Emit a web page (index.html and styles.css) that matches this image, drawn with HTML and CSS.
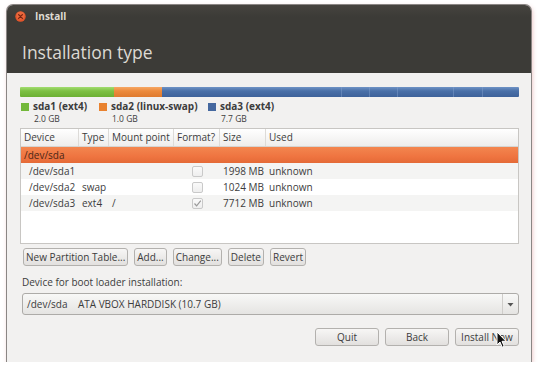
FILE: index.html
```html
<!DOCTYPE html>
<html>
<head>
<meta charset="utf-8">
<link rel="stylesheet" href="styles.css">
</head>
<body>
<div class="window">
  <div class="titlebar">
    <div class="titlerow">
      <span class="close"><svg width="11" height="11" viewBox="0 0 11 11"><circle cx="5.5" cy="5.5" r="5.2" fill="#e2552b"/><circle cx="5.5" cy="4.6" r="4" fill="#f07a4e" opacity="0.5"/><path d="M3.6 3.6 L7.4 7.4 M7.4 3.6 L3.6 7.4" stroke="#7a2410" stroke-width="1.3" stroke-linecap="round"/></svg></span>
      <span class="wintitle">Install</span>
    </div>
    <div class="heading">Installation type</div>
  </div>
  <div class="content">
    <div class="partbar">
      <div class="seg green" style="width:94px"></div>
      <div class="seg orange" style="width:48px"></div>
      <div class="seg blue"></div>
    </div>
    <div class="legend">
      <div class="litem">
        <span class="swatch sw-green"></span>
        <div><div class="lname">sda1 (ext4)</div><div class="lsize">2.0 GB</div></div>
      </div>
      <div class="litem">
        <span class="swatch sw-orange"></span>
        <div><div class="lname">sda2 (linux-swap)</div><div class="lsize">1.0 GB</div></div>
      </div>
      <div class="litem">
        <span class="swatch sw-blue"></span>
        <div><div class="lname">sda3 (ext4)</div><div class="lsize">7.7 GB</div></div>
      </div>
    </div>
    <div class="table">
      <div class="row head">
        <div class="c">Device</div><div class="c">Type</div><div class="c">Mount point</div><div class="c">Format?</div><div class="c">Size</div><div class="c last">Used</div>
      </div>
      <div class="row sel">
        <div class="c">/dev/sda</div><div class="c"></div><div class="c"></div><div class="c"></div><div class="c"></div><div class="c"></div>
      </div>
      <div class="row alt">
        <div class="c dev">/dev/sda1</div><div class="c"></div><div class="c"></div><div class="c chk"><span class="box"></span></div><div class="c">1998 MB</div><div class="c used">unknown</div>
      </div>
      <div class="row">
        <div class="c dev">/dev/sda2</div><div class="c">swap</div><div class="c"></div><div class="c chk"><span class="box"></span></div><div class="c">1024 MB</div><div class="c used">unknown</div>
      </div>
      <div class="row alt">
        <div class="c dev">/dev/sda3</div><div class="c">ext4</div><div class="c">/</div><div class="c chk"><span class="box"><svg width="9" height="9" viewBox="0 0 9 9"><path d="M1.5 4.5 L3.6 6.8 L7.8 1.6" fill="none" stroke="#9a9a9a" stroke-width="1.2"/></svg></span></div><div class="c">7712 MB</div><div class="c used">unknown</div>
      </div>
    </div>
    <div class="tools">
      <span class="btn">New Partition Table...</span>
      <span class="btn">Add...</span>
      <span class="btn">Change...</span>
      <span class="btn">Delete</span>
      <span class="btn">Revert</span>
    </div>
    <div class="label">Device for boot loader installation:</div>
    <div class="combo">
      <span class="ctext">/dev/sda&nbsp;&nbsp;&nbsp;&nbsp;ATA VBOX HARDDISK (10.7 GB)</span>
      <span class="carrow"><svg width="7" height="5" viewBox="0 0 7 5"><path d="M0.5 1 L6.5 1 L3.5 4.5 Z" fill="#555"/></svg></span>
    </div>
    <div class="actions">
      <span class="btn big">Quit</span>
      <span class="btn big">Back</span>
      <span class="btn big">Install Now</span>
    </div>
  </div>
  <svg class="cursor" width="12" height="18" viewBox="0 0 12 18"><path d="M1 1 L1 14 L4 11 L6.2 16.2 L8.2 15.3 L6 10.3 L10 10.3 Z" fill="#111" stroke="#fff" stroke-width="1"/></svg>
</div>
</body>
</html>
```
FILE: styles.css
```css
html, body {
  margin: 0;
  padding: 0;
  background: #ffffff;
}
body {
  font-family: "Open Sans", "DejaVu Sans", sans-serif;
  font-size: 10px;
  color: #3c3c3c;
}
.window {
  position: relative;
  margin: 5px 0 0 7px;
  width: 524px;
  height: 357px;
  border-radius: 6px 6px 0 0;
  box-shadow: 0 0 0 1px #8a8684, 1px 2px 5px rgba(200, 90, 90, 0.45);
  overflow: hidden;
  display: flex;
  flex-direction: column;
}
.titlebar {
  height: 68px;
  background: linear-gradient(#46443f, #3c3b37 12px, #3c3b37);
  color: #dfdbd2;
  box-sizing: border-box;
  padding: 4px 0 0 8px;
}
.titlerow {
  display: flex;
  align-items: center;
  height: 14px;
  gap: 9px;
}
.close {
  display: flex;
  width: 11px;
  height: 11px;
}
.wintitle {
  font-weight: bold;
  font-size: 10px;
  color: #dfdbd2;
}
.heading {
  margin: 18px 0 0 7px;
  font-size: 17.5px;
  color: #dcd9d3;
  line-height: 22px;
}
.content {
  flex: 1;
  background: #f2f1f0;
  padding: 14px 12px 0 13px;
}
.partbar {
  display: flex;
  height: 10px;
  border-radius: 1px;
  overflow: hidden;
}
.seg { height: 100%; }
.green { background: linear-gradient(#a3dd70, #7dc043 40%, #6cb033); }
.orange { background: linear-gradient(#f6a764, #ec8a3c 40%, #df7a2e); }
.blue {
  flex: 1;
  background:
    linear-gradient(90deg, transparent 179px, rgba(130,160,205,0.45) 179px 180px, transparent 180px 207px, rgba(130,160,205,0.45) 207px 208px, transparent 208px 235px, rgba(130,160,205,0.45) 235px 236px, transparent 236px 291px, rgba(130,160,205,0.45) 291px 292px, transparent 292px 320px, rgba(130,160,205,0.45) 320px 321px, transparent 321px),
    linear-gradient(#6f93c6, #4a70a8 40%, #3e629a);
}
.legend {
  display: flex;
  margin-top: 5px;
  height: 26px;
}
.litem {
  display: flex;
  gap: 4px;
}
.litem:nth-child(1) { width: 78px; }
.litem:nth-child(2) { width: 109px; }
.swatch {
  width: 8px;
  height: 8px;
  margin: 1px 0 0 1px;
}
.sw-green { background: #73b83a; }
.sw-orange { background: #e9822f; }
.sw-blue { background: #45689f; }
.lname {
  font-weight: bold;
  font-size: 10px;
  line-height: 13px;
  margin-top: -2px;
}
.lsize {
  font-size: 8.5px;
  line-height: 11px;
  margin-left: 1px;
}
.table {
  height: 116px;
  box-sizing: border-box;
  border: 1px solid #c8c6c3;
  background: #fff;
}
.row {
  display: grid;
  grid-template-columns: 58px 30px 65px 46px 46px 1fr;
  height: 16px;
  line-height: 16px;
  white-space: nowrap;
}
.row .c { padding-left: 3px; overflow: hidden; }
.head {
  height: 17px;
  line-height: 17px;
  background: linear-gradient(#ffffff, #eeedec);
  border-bottom: 1px solid #d6d4d1;
}
.head .c { border-right: 1px solid #dddbd8; }
.head .c.last { border-right: none; }
.sel {
  background: linear-gradient(#f3864f, #ef7440 60%, #e46a37);
  color: #4a2616;
}
.alt { background: #f4f4f3; }
.row .c.dev { padding-left: 8px; }
.row .c.chk {
  display: flex;
  justify-content: center;
  align-items: center;
  padding: 0;
}
.box {
  width: 9px;
  height: 9px;
  border: 1px solid #c9c9c9;
  border-radius: 2px;
  background: linear-gradient(#fafafa, #eeeeee);
  display: flex;
}
.tools {
  display: flex;
  gap: 6px;
  margin: 4px 0 0 3px;
}
.btn {
  display: inline-flex;
  align-items: center;
  justify-content: center;
  height: 18px;
  box-sizing: border-box;
  padding: 0 2px;
  border: 1px solid #b3b1ae;
  border-radius: 3px;
  background: linear-gradient(#f7f6f5, #e2e0de);
  color: #3c3c3c;
  white-space: nowrap;
}
.label {
  margin: 9px 0 0 2px;
  line-height: 15px;
}
.combo {
  display: flex;
  margin: 3px 0 0 2px;
  width: 497px;
  height: 22px;
  box-sizing: border-box;
  border: 1px solid #adaba8;
  border-radius: 3px;
  background: linear-gradient(#f8f8f7, #e5e4e2);
  align-items: center;
}
.ctext {
  flex: 1;
  padding-left: 4px;
}
.carrow {
  width: 15px;
  height: 100%;
  border-left: 1px solid #cfcdca;
  display: flex;
  align-items: center;
  justify-content: center;
}
.actions {
  display: flex;
  justify-content: flex-end;
  gap: 6px;
  margin-top: 13px;
}
.btn.big {
  width: 64px;
  height: 18px;
}
.cursor {
  position: absolute;
  left: 489px;
  top: 326px;
}
```
